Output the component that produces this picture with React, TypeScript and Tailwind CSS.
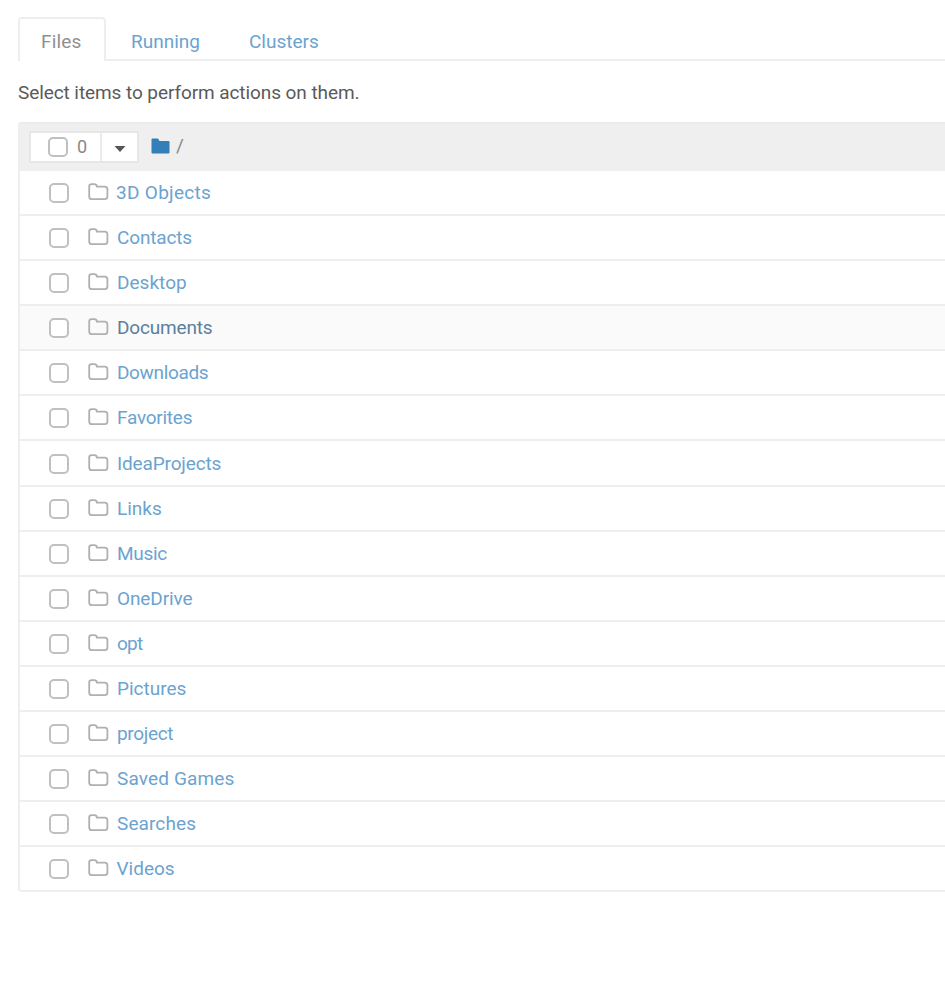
const rows = [
  { name: "3D Objects", tracking: "ml-[7px] tracking-[0.3px]" },
  { name: "Contacts", tracking: "ml-[8px] tracking-[-0.15px]" },
  { name: "Desktop", tracking: "ml-[8px] tracking-[0.03px]" },
  { name: "Documents", tracking: "ml-[8px] tracking-[-0.18px]", hovered: true },
  { name: "Downloads", tracking: "ml-[8px] tracking-[-0.35px]" },
  { name: "Favorites", tracking: "ml-[8px] tracking-[-0.25px]" },
  { name: "IdeaProjects", tracking: "ml-[8px] tracking-[-0.15px]" },
  { name: "Links", tracking: "ml-[8px] tracking-[0px]" },
  { name: "Music", tracking: "ml-[8px] tracking-[-0.3px]" },
  { name: "OneDrive", tracking: "ml-[8px] tracking-[-0.1px]" },
  { name: "opt", tracking: "ml-[8px] tracking-[-0.8px]" },
  { name: "Pictures", tracking: "ml-[8px] tracking-[0px]" },
  { name: "project", tracking: "ml-[8px] tracking-[-0.35px]" },
  { name: "Saved Games", tracking: "ml-[8px] tracking-[0.15px]" },
  { name: "Searches", tracking: "ml-[8px] tracking-[0.1px]" },
  { name: "Videos", tracking: "ml-[7.5px] tracking-[0px]" },
];

function Checkbox() {
  return (
    <span
      role="checkbox"
      aria-checked="false"
      className="block h-[20px] w-[20px] shrink-0 rounded-[5px] border-2 border-[#c0c0c0] bg-white"
    />
  );
}

function FolderOutline() {
  return (
    <svg className="block shrink-0" width="21" height="18" viewBox="0 0 21 18" fill="none" stroke="#b0b0b0" strokeWidth="1.8">
      <path d="M1.2 3.6Q1.2 1.2 3.6 1.2H6.4Q8.7 1.2 8.9 3.6H16.8Q19.4 3.6 19.4 6.2V13.6Q19.4 16.2 16.8 16.2H3.8Q1.2 16.2 1.2 13.6Z" />
    </svg>
  );
}

export default function App() {
  return (
    <div className="h-[993px] w-[945px] overflow-hidden bg-white pl-[18px] pt-[17px] font-['Roboto','Liberation_Sans',sans-serif] text-[19px] leading-[26px] text-[#5a5a5a]">
      <nav className="flex h-[44px]">
        <div className="h-[44px] w-[88px] shrink-0 rounded-t-[4px] border-2 border-b-0 border-[#eeeeee] pl-[21px] pt-[10px] tracking-[0.2px] text-[#8f8f8f]">
          Files
        </div>
        <div className="flex flex-1 border-b-2 border-[#eeeeee] pt-[12px] text-[#6ba3d0]">
          <a className="ml-[25px] w-[118px]">Running</a>
          <a>Clusters</a>
        </div>
      </nav>
      <p className="mt-[19px] h-[26px] whitespace-nowrap tracking-[-0.08px]">Select items to perform actions on them.</p>
      <div className="mt-[16px] rounded-l-[3px] border-l-2 border-[#eeeeee]">
        <div className="flex h-[49px] items-center border-t-2 border-[#ebebeb] bg-[#efefef] pb-px pl-[9px]">
          <div className="flex h-[32px] w-[110px] rounded-[2px] border-2 border-[#e6e6e6] bg-white">
            <div className="flex w-[71px] items-center border-r-2 border-[#ebebeb] pl-[17px]">
              <Checkbox />
              <span className="ml-[9px] text-[18px] text-[#888]">0</span>
            </div>
            <div className="flex flex-1 items-center justify-center">
              <svg className="mt-[3px]" width="12" height="6" viewBox="0 0 12 6" fill="#555">
                <path d="M0.5 0H11.5L6 6Z" />
              </svg>
            </div>
          </div>
          <svg className="mb-[2px] ml-[12px]" width="19" height="16" viewBox="0 0 19 16" fill="#337fb8">
            <path d="M0.5 1.5Q0.5 0.5 1.5 0.5H6.5Q7.5 0.5 8 2L8.3 3H17.5Q18.5 3 18.5 4V14.5Q18.5 15.5 17.5 15.5H1.5Q0.5 15.5 0.5 14.5Z" />
          </svg>
          <span className="mb-[2px] ml-[6px] text-[#888]">/</span>
        </div>
        <ul>
          {rows.map((row) => (
            <li
              key={row.name}
              className={`flex h-[45.08px] items-center border-b-2 border-[#eeeeee] pl-[29px] pt-px last:rounded-bl-[3px] ${row.hovered ? "bg-[#fafafa]" : "bg-white"}`}
            >
              <Checkbox />
              <span className="mb-[2px] ml-[19px]">
                <FolderOutline />
              </span>
              <a className={`whitespace-nowrap ${row.tracking} ${row.hovered ? "text-[#5c7f9d]" : "text-[#6ba3d0]"}`}>
                {row.name}
              </a>
            </li>
          ))}
        </ul>
      </div>
    </div>
  );
}
